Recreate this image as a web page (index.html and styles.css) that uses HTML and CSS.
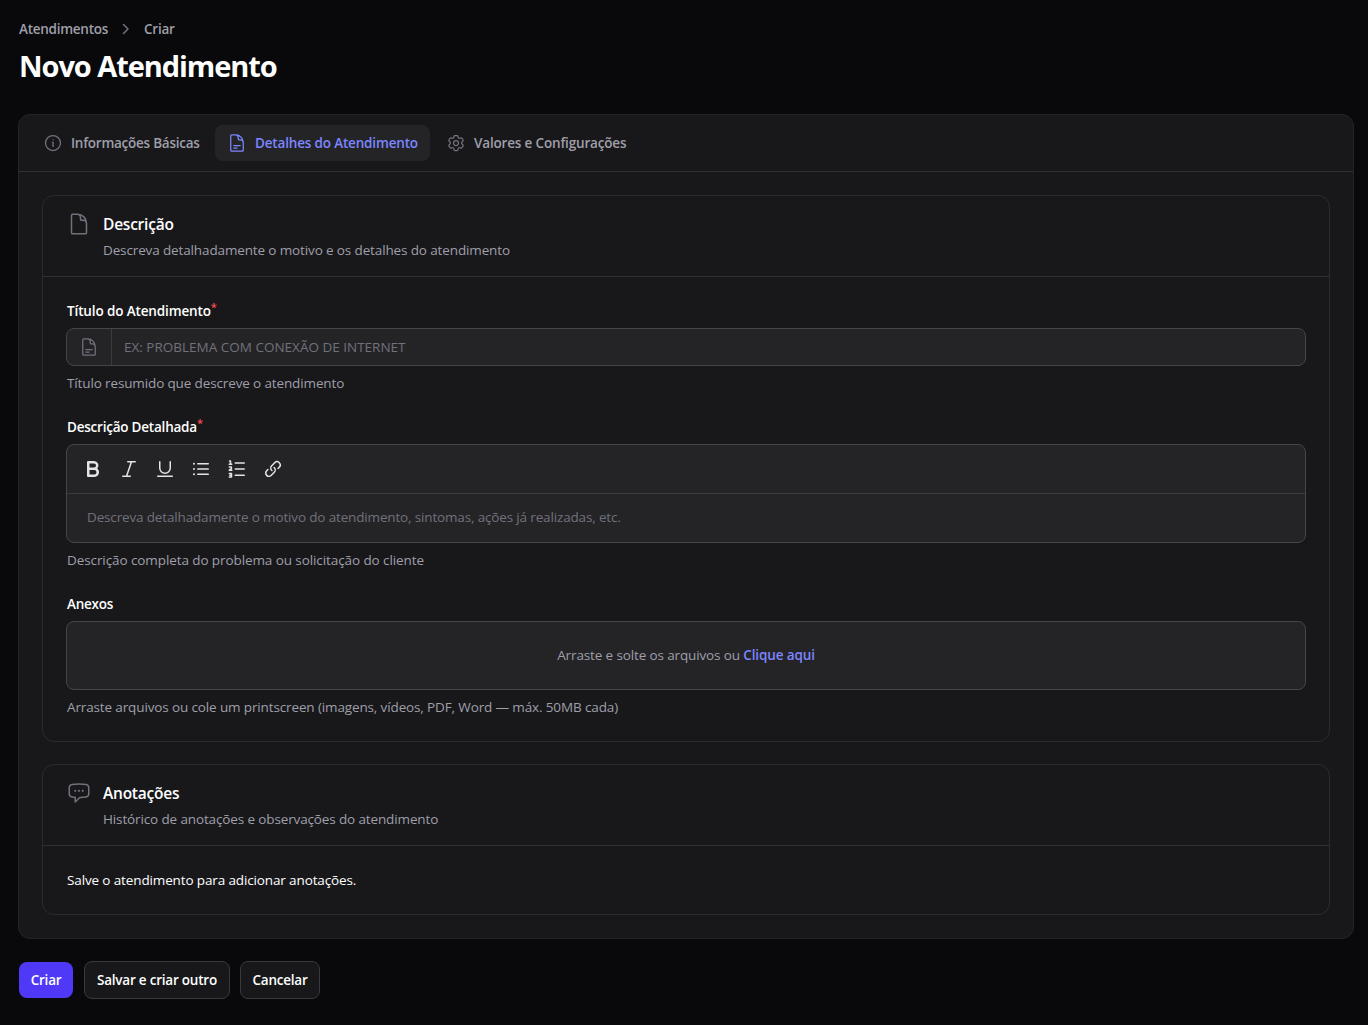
FILE: index.html
```html
<!DOCTYPE html>
<html lang="pt-BR">
<head>
    <meta charset="UTF-8">
    <meta name="viewport" content="width=device-width, initial-scale=1.0">
    <title>Novo Atendimento</title>
    <link rel="stylesheet" href="styles.css">
</head>
<body>
    <header class="page-header">
        <nav class="breadcrumbs">
            <a class="crumb-parent">Atendimentos</a>
            <svg class="chevron" viewBox="0 0 20 20"><path d="m7.5 5.5 4.5 4.5-4.5 4.5"/></svg>
            <a class="crumb-current">Criar</a>
        </nav>
        <h1 class="page-title">Novo Atendimento</h1>
    </header>

    <main class="panel">
        <nav class="tabs">
            <button class="tab tab-info">
                <svg class="icon" viewBox="0 0 24 24"><path d="m11.25 11.25.041-.02a.75.75 0 0 1 1.063.852l-.708 2.836a.75.75 0 0 0 1.063.853l.041-.021M21 12a9 9 0 1 1-18 0 9 9 0 0 1 18 0Zm-9-3.75h.008v.008H12V8.25Z"/></svg>
                <span>Informações Básicas</span>
            </button>
            <button class="tab tab-details active">
                <svg class="icon" viewBox="0 0 24 24"><path d="M19.5 14.25v-2.625a3.375 3.375 0 0 0-3.375-3.375h-1.5A1.125 1.125 0 0 1 13.5 7.125v-1.5a3.375 3.375 0 0 0-3.375-3.375H8.25m0 12.75h7.5m-7.5 3H12M10.5 2.25H5.625c-.621 0-1.125.504-1.125 1.125v17.25c0 .621.504 1.125 1.125 1.125h12.75c.621 0 1.125-.504 1.125-1.125V11.25a9 9 0 0 0-9-9Z"/></svg>
                <span>Detalhes do Atendimento</span>
            </button>
            <button class="tab tab-values">
                <svg class="icon" viewBox="0 0 24 24"><path d="M9.594 3.94c.09-.542.56-.94 1.11-.94h2.593c.55 0 1.02.398 1.11.94l.213 1.281c.063.374.313.686.645.87.074.04.147.083.22.127.325.196.72.257 1.075.124l1.217-.456a1.125 1.125 0 0 1 1.37.49l1.296 2.247a1.125 1.125 0 0 1-.26 1.431l-1.003.827c-.293.241-.438.613-.43.992a7.723 7.723 0 0 1 0 .255c-.008.378.137.75.43.991l1.004.827c.424.35.534.955.26 1.43l-1.298 2.247a1.125 1.125 0 0 1-1.369.491l-1.217-.456c-.355-.133-.75-.072-1.076.124a6.47 6.47 0 0 1-.22.128c-.331.183-.581.495-.644.869l-.213 1.281c-.09.543-.56.94-1.11.94h-2.594c-.55 0-1.019-.398-1.11-.94l-.213-1.281c-.062-.374-.312-.686-.644-.87a6.52 6.52 0 0 1-.22-.127c-.325-.196-.72-.257-1.076-.124l-1.217.456a1.125 1.125 0 0 1-1.369-.49l-1.297-2.247a1.125 1.125 0 0 1 .26-1.431l1.004-.827c.292-.24.437-.613.43-.991a6.932 6.932 0 0 1 0-.255c.007-.38-.138-.751-.43-.992l-1.004-.827a1.125 1.125 0 0 1-.26-1.43l1.297-2.247a1.125 1.125 0 0 1 1.37-.491l1.216.456c.356.133.751.072 1.076-.124.072-.044.146-.086.22-.128.332-.183.582-.495.644-.869l.214-1.28Z"/><path d="M15 12a3 3 0 1 1-6 0 3 3 0 0 1 6 0Z"/></svg>
                <span>Valores e Configurações</span>
            </button>
        </nav>

        <div class="sections">
            <section class="section">
                <div class="section-header">
                    <svg class="section-icon" viewBox="0 0 24 24"><path d="M19.5 14.25v-2.625a3.375 3.375 0 0 0-3.375-3.375h-1.5A1.125 1.125 0 0 1 13.5 7.125v-1.5a3.375 3.375 0 0 0-3.375-3.375H8.25M10.5 2.25H5.625c-.621 0-1.125.504-1.125 1.125v17.25c0 .621.504 1.125 1.125 1.125h12.75c.621 0 1.125-.504 1.125-1.125V11.25a9 9 0 0 0-9-9Z"/></svg>
                    <div>
                        <h2>Descrição</h2>
                        <p class="desc-details">Descreva detalhadamente o motivo e os detalhes do atendimento</p>
                    </div>
                </div>
                <div class="section-body">
                    <div class="field">
                        <label for="titulo"><span class="label-title">Título do Atendimento</span><sup>*</sup></label>
                        <div class="input-wrap">
                            <span class="input-prefix">
                                <svg class="icon" viewBox="0 0 24 24"><path d="M19.5 14.25v-2.625a3.375 3.375 0 0 0-3.375-3.375h-1.5A1.125 1.125 0 0 1 13.5 7.125v-1.5a3.375 3.375 0 0 0-3.375-3.375H8.25m0 12.75h7.5m-7.5 3H12M10.5 2.25H5.625c-.621 0-1.125.504-1.125 1.125v17.25c0 .621.504 1.125 1.125 1.125h12.75c.621 0 1.125-.504 1.125-1.125V11.25a9 9 0 0 0-9-9Z"/></svg>
                            </span>
                            <input type="text" id="titulo" placeholder="EX: PROBLEMA COM CONEXÃO DE INTERNET">
                        </div>
                        <p class="hint hint-title">Título resumido que descreve o atendimento</p>
                    </div>

                    <div class="field">
                        <label><span class="label-desc">Descrição Detalhada</span><sup>*</sup></label>
                        <div class="editor">
                            <div class="toolbar">
                                <button><svg viewBox="0 0 20 20"><path fill-rule="evenodd" d="M4 3a1 1 0 0 1 1-1h6a4.5 4.5 0 0 1 3.274 7.587A4.75 4.75 0 0 1 11.25 18H5a1 1 0 0 1-1-1V3Zm2.5 5.5v-4H11a2 2 0 1 1 0 4H6.5Zm0 2.5v4.5h4.75a2.25 2.25 0 0 0 0-4.5H6.5Z"/></svg></button>
                                <button><svg viewBox="0 0 20 20"><path d="M8 2.75A.75.75 0 0 1 8.75 2h7.5a.75.75 0 0 1 0 1.5h-3.215l-4.483 13h2.698a.75.75 0 0 1 0 1.5h-7.5a.75.75 0 0 1 0-1.5h3.215l4.483-13H8.75A.75.75 0 0 1 8 2.75Z"/></svg></button>
                                <button><svg viewBox="0 0 20 20"><path d="M4.75 2a.75.75 0 0 1 .75.75V9a4.5 4.5 0 1 0 9 0V2.75a.75.75 0 0 1 1.5 0V9A6 6 0 0 1 4 9V2.75A.75.75 0 0 1 4.75 2ZM2 17.25a.75.75 0 0 1 .75-.75h14.5a.75.75 0 0 1 0 1.5H2.75a.75.75 0 0 1-.75-.75Z"/></svg></button>
                                <button><svg viewBox="0 0 20 20"><path d="M6 4.75A.75.75 0 0 1 6.75 4h10.5a.75.75 0 0 1 0 1.5H6.75A.75.75 0 0 1 6 4.75ZM6 10a.75.75 0 0 1 .75-.75h10.5a.75.75 0 0 1 0 1.5H6.75A.75.75 0 0 1 6 10Zm0 5.25a.75.75 0 0 1 .75-.75h10.5a.75.75 0 0 1 0 1.5H6.75a.75.75 0 0 1-.75-.75Z"/><circle cx="3" cy="4.75" r="1"/><circle cx="3" cy="10" r="1"/><circle cx="3" cy="15.25" r="1"/></svg></button>
                                <button><svg viewBox="0 0 20 20"><path d="M7.5 4a.75.75 0 0 1 .75-.75h9a.75.75 0 0 1 0 1.5h-9A.75.75 0 0 1 7.5 4Zm0 6a.75.75 0 0 1 .75-.75h9a.75.75 0 0 1 0 1.5h-9A.75.75 0 0 1 7.5 10Zm0 6.25a.75.75 0 0 1 .75-.75h9a.75.75 0 0 1 0 1.5h-9a.75.75 0 0 1-.75-.75Z"/><path class="line" d="M2.5 2h1v3.2M2.2 5.2h2.5M2.3 8.1h2.1v1.5l-2.1 1.6h2.6M2.3 14.4h2.2v3.6H2.3m.6-1.8h1.5"/></svg></button>
                                <button><svg viewBox="0 0 20 20"><path d="M12.232 4.232a2.5 2.5 0 0 1 3.536 3.536l-1.225 1.224a.75.75 0 0 0 1.061 1.06l1.224-1.224a4 4 0 0 0-5.656-5.656l-3 3a4 4 0 0 0 .225 5.865.75.75 0 0 0 .977-1.138 2.5 2.5 0 0 1-.142-3.667l3-3Z"/><path d="M11.603 7.963a.75.75 0 0 0-.977 1.138 2.5 2.5 0 0 1 .142 3.667l-3 3a2.5 2.5 0 0 1-3.536-3.536l1.225-1.224a.75.75 0 0 0-1.061-1.06l-1.224 1.224a4 4 0 1 0 5.656 5.656l3-3a4 4 0 0 0-.225-5.865Z"/></svg></button>
                            </div>
                            <div class="editor-content"><span>Descreva detalhadamente o motivo do atendimento, sintomas, ações já realizadas, etc.</span></div>
                        </div>
                        <p class="hint hint-desc">Descrição completa do problema ou solicitação do cliente</p>
                    </div>

                    <div class="field">
                        <label><span class="label-files">Anexos</span></label>
                        <div class="dropzone"><span>Arraste e solte os arquivos ou <a>Clique aqui</a></span></div>
                        <p class="hint hint-files">Arraste arquivos ou cole um printscreen (imagens, vídeos, PDF, Word — máx. 50MB cada)</p>
                    </div>
                </div>
            </section>

            <section class="section">
                <div class="section-header">
                    <svg class="section-icon" viewBox="0 0 24 24"><path d="M8.625 9.75a.375.375 0 1 1-.75 0 .375.375 0 0 1 .75 0Zm0 0H8.25m4.125 0a.375.375 0 1 1-.75 0 .375.375 0 0 1 .75 0Zm0 0H12m4.125 0a.375.375 0 1 1-.75 0 .375.375 0 0 1 .75 0Zm0 0h-.375m-13.5 3.01c0 1.6 1.123 2.994 2.707 3.227 1.087.16 2.185.283 3.293.369V21l4.184-4.183a1.14 1.14 0 0 1 .778-.332 48.294 48.294 0 0 0 5.83-.498c1.585-.233 2.708-1.626 2.708-3.228V6.741c0-1.602-1.123-2.995-2.707-3.228A48.394 48.394 0 0 0 12 3c-2.392 0-4.744.175-7.043.513C3.373 3.746 2.25 5.14 2.25 6.741v6.018Z"/></svg>
                    <div>
                        <h2>Anotações</h2>
                        <p class="desc-notes">Histórico de anotações e observações do atendimento</p>
                    </div>
                </div>
                <div class="section-body notes-body">
                    <p><span>Salve o atendimento para adicionar anotações.</span></p>
                </div>
            </section>
        </div>
    </main>

    <footer class="actions">
        <button class="btn btn-primary">Criar</button>
        <button class="btn btn-save">Salvar e criar outro</button>
        <button class="btn btn-cancel">Cancelar</button>
    </footer>
</body>
</html>
```
FILE: styles.css
```css
* {
    box-sizing: border-box;
    margin: 0;
    padding: 0;
}
body {
    padding: 17px 14px 0 18px;
    min-height: 100vh;
    background-color: #09090b;
    color: white;
    font-family: "Segoe UI", "Open Sans", sans-serif;
    font-size: 13.5px;
    line-height: 24px;
    letter-spacing: -0.13px;
    white-space: nowrap;
}
button, input {
    font: inherit;
    letter-spacing: inherit;
    color: inherit;
    border: none;
    background: none;
}
svg {
    flex: none;
    fill: none;
    stroke: currentColor;
    stroke-width: 1.5;
    stroke-linecap: round;
    stroke-linejoin: round;
}
.page-header {
    padding-left: 1px;
}
.breadcrumbs {
    display: flex;
    align-items: center;
    gap: 8px;
    color: #9f9fa9;
    font-weight: 600;
    letter-spacing: -0.26px;
}
.chevron {
    width: 20px;
    height: 20px;
    color: #71717b;
}
.page-title {
    margin-top: 7px;
    font-size: 29px;
    line-height: 36px;
    font-weight: 700;
    letter-spacing: -1.06px;
}

.panel {
    margin-top: 30px;
    height: 825px;
    background-color: #18181b;
    border: 1px solid #242427;
    border-radius: 12px;
}
.tabs {
    display: flex;
    gap: 4px;
    height: 57px;
    padding: 10px 12px;
    border-bottom: 1px solid #2f2f32;
}
.tab {
    display: flex;
    align-items: center;
    gap: 8px;
    height: 36px;
    padding: 0 12px;
    border-radius: 8px;
    color: #9f9fa9;
    font-weight: 600;
    letter-spacing: -0.17px;
}
.tab-info {
    width: 180px;
    letter-spacing: -0.25px;
}
.tab-details {
    width: 215px;
}
.icon {
    width: 20px;
    height: 20px;
    color: #71717b;
}
.active {
    background-color: #242427;
    color: #7c86ff;
}
.active .icon {
    color: #7c86ff;
}

.sections {
    display: flex;
    flex-direction: column;
    gap: 22px;
    padding: 23px;
}
.section {
    border: 1px solid #2c2c2f;
    border-radius: 12px;
}
.section-header {
    display: flex;
    gap: 12px;
    height: 81px;
    padding: 16px 24px;
    border-bottom: 1px solid #2f2f32;
    color: #9f9fa9;
}
.section-icon {
    width: 24px;
    height: 24px;
    color: #71717b;
}
.section h2 {
    color: white;
    font-size: 15.5px;
    line-height: 24px;
    font-weight: 600;
    letter-spacing: -0.23px;
}
.section-header p {
    margin-top: 2px;
}
.section-body {
    display: flex;
    flex-direction: column;
    gap: 20px;
    padding: 22px 23px 22px;
}
.field label {
    display: block;
    height: 24px;
    padding-left: 1px;
    font-weight: 600;
}
.label-desc, .label-files {
    letter-spacing: -0.22px;
}
.field sup {
    color: #fb4b4f;
    font-size: 11px;
    line-height: 0;
}
.input-wrap {
    display: flex;
    height: 38px;
    margin-top: 5px;
    border: 1px solid #464649;
    border-radius: 8px;
    background-color: #242427;
}
.input-prefix {
    display: flex;
    align-items: center;
    padding: 0 12px;
    border-right: 1px solid #3b3b3e;
}
.input-wrap input {
    flex: 1;
    padding: 0 12px;
    outline: none;
    letter-spacing: 0;
}
.input-wrap input::placeholder {
    color: #71717b;
}
.hint {
    margin-top: 5px;
    padding-left: 1px;
    color: #9f9fa9;
}
.hint-desc {
    letter-spacing: -0.09px;
}
.editor {
    height: 99px;
    margin-top: 5px;
    border: 1px solid #464649;
    border-radius: 8px;
    background-color: #242427;
}
.toolbar {
    display: flex;
    gap: 4px;
    height: 49px;
    padding: 8px 10px;
    border-bottom: 1px solid #3b3b3e;
}
.toolbar button {
    display: flex;
    align-items: center;
    justify-content: center;
    width: 32px;
    height: 32px;
    color: #e4e4e7;
}
.toolbar svg {
    width: 20px;
    height: 20px;
    fill: currentColor;
    stroke: none;
}
.toolbar .line {
    fill: none;
    stroke: currentColor;
    stroke-width: 1.5;
}
.editor-content {
    padding: 11px 20px;
    color: #71717b;
    letter-spacing: -0.155px;
}
.dropzone {
    display: flex;
    align-items: center;
    justify-content: center;
    height: 69px;
    margin-top: 5px;
    padding-bottom: 1px;
    border: 1px solid #464649;
    border-radius: 8px;
    background-color: #242427;
    color: #9f9fa9;
}
.dropzone a {
    color: #7c86ff;
    font-weight: 600;
}
.notes-body {
    padding: 22px 24px;
}

.actions {
    display: flex;
    align-items: center;
    gap: 10px;
    margin-top: 22px;
    padding-left: 1px;
}
.btn {
    height: 38px;
    border: 1px solid #39393b;
    border-radius: 8px;
    background-color: #18181a;
    font-weight: 600;
    letter-spacing: -0.22px;
}
.btn-primary {
    width: 54px;
    height: 36px;
    margin-right: 1px;
    border: none;
    background-color: #4f39f6;
}
.btn-save {
    width: 146px;
}
.btn-cancel {
    width: 80px;
}
```
